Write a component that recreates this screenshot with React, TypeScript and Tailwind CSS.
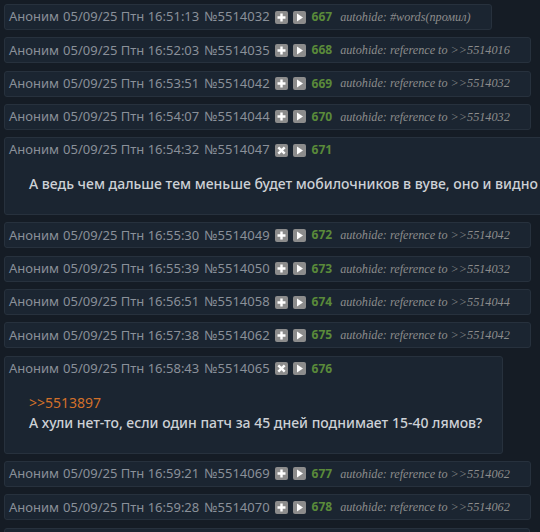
import React from "react";

type PostProps = {
  time: string;
  id: string;
  n: number;
  autohide?: string;
  expanded?: boolean;
  reply?: string;
  body?: string;
  nowrap?: boolean;
};

function Btn({ kind }: { kind: "plus" | "play" | "x" }) {
  return (
    <svg width="13" height="13" viewBox="0 0 13 13" className="shrink-0">
      <rect x="0" y="0" width="13" height="13" rx="2" fill="#8c8c8c" />
      {kind === "plus" && (
        <path d="M6.5 2.5V10.5M2.5 6.5H10.5" stroke="#ffffff" strokeWidth="2.4" />
      )}
      {kind === "play" && <path d="M4 2.5L10 6.5L4 10.5Z" fill="#ffffff" />}
      {kind === "x" && (
        <path d="M3.3 3.3L9.7 9.7M9.7 3.3L3.3 9.7" stroke="#ffffff" strokeWidth="2.4" />
      )}
    </svg>
  );
}

function Post({ time, id, n, autohide, expanded, reply, body, nowrap }: PostProps) {
  return (
    <div className="mb-[7.3px] flex">
      <div className="shrink-0 rounded-[3px] border border-[#27313d] bg-[#1b2531] pl-[4px] pr-[20px] pt-[2px] pb-[2px]">
        <div className="flex h-[20px] items-center whitespace-nowrap text-[13px] text-[#8a9099]">
          <span>Аноним</span>
          <span className="ml-[4px]">05/09/25 Птн {time}</span>
          <span className="ml-[5px]">№{id}</span>
          <span className="ml-[5px] flex items-center gap-[5px]">
            <Btn kind={expanded ? "x" : "plus"} />
            <Btn kind="play" />
          </span>
          <span className="ml-[6px] text-[12px] font-bold text-[#5a8a3a]">{n}</span>
          {autohide && (
            <span
              className="ml-[8px] text-[12.2px] italic text-[#8c8c8c]"
              style={{ fontFamily: '"Liberation Serif", serif' }}
            >
              autohide: {autohide}
            </span>
          )}
        </div>
        {expanded && (
          <div
            className={
              "mt-[14px] mb-[18px] ml-[20px] text-[14px] leading-[20px] font-medium text-[#cdd1d6] " +
              (nowrap ? "whitespace-nowrap" : "")
            }
          >
            {reply && <div className="font-normal text-[#d2702a]">&gt;&gt;{reply}</div>}
            <div>{body}</div>
          </div>
        )}
      </div>
    </div>
  );
}

export default function App() {
  return (
    <div
      className="h-[532px] w-[540px] overflow-hidden bg-[#151c25] pl-[4px] pt-[4px]"
      style={{ fontFamily: '"Noto Sans", sans-serif' }}
    >
      <Post time="16:51:13" id="5514032" n={667} autohide="#words(промил)" />
      <Post time="16:52:03" id="5514035" n={668} autohide="reference to >>5514016" />
      <Post time="16:53:51" id="5514042" n={669} autohide="reference to >>5514032" />
      <Post time="16:54:07" id="5514044" n={670} autohide="reference to >>5514032" />
      <Post
        time="16:54:32"
        id="5514047"
        n={671}
        expanded
        nowrap
        body="А ведь чем дальше тем меньше будет мобилочников в вуве, оно и видно"
      />
      <Post time="16:55:30" id="5514049" n={672} autohide="reference to >>5514042" />
      <Post time="16:55:39" id="5514050" n={673} autohide="reference to >>5514032" />
      <Post time="16:56:51" id="5514058" n={674} autohide="reference to >>5514044" />
      <Post time="16:57:38" id="5514062" n={675} autohide="reference to >>5514042" />
      <Post
        time="16:58:43"
        id="5514065"
        n={676}
        expanded
        reply="5513897"
        body="А хули нет-то, если один патч за 45 дней поднимает 15-40 лямов?"
      />
      <Post time="16:59:21" id="5514069" n={677} autohide="reference to >>5514062" />
      <Post time="16:59:28" id="5514070" n={678} autohide="reference to >>5514062" />
      <div className="h-[26px] w-[526px] rounded-[3px] border border-[#27313d] bg-[#1b2531]" />
    </div>
  );
}
